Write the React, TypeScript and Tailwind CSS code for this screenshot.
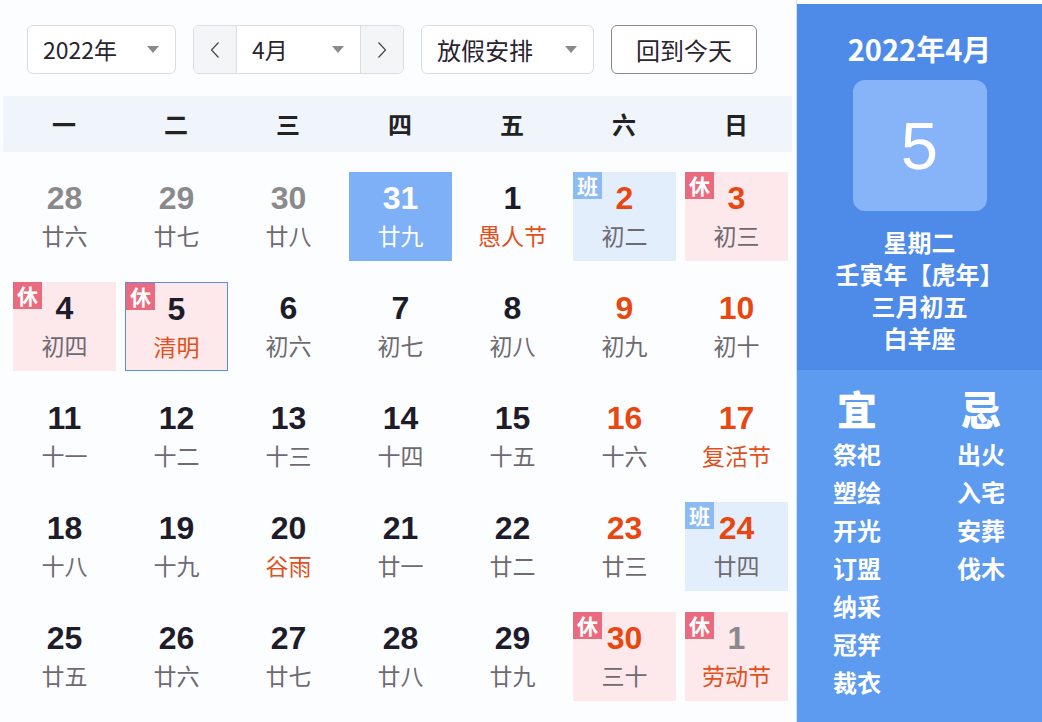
import React from "react";

type Day = {
  d: number;
  lunar: string;
  kind?: "prev" | "red" | "next";
  fest?: boolean;
  badge?: "休" | "班";
  today?: boolean;
  selected?: boolean;
};

const days: Day[] = [
  { d: 28, lunar: "廿六", kind: "prev" },
  { d: 29, lunar: "廿七", kind: "prev" },
  { d: 30, lunar: "廿八", kind: "prev" },
  { d: 31, lunar: "廿九", today: true },
  { d: 1, lunar: "愚人节", fest: true },
  { d: 2, lunar: "初二", kind: "red", badge: "班" },
  { d: 3, lunar: "初三", kind: "red", badge: "休" },
  { d: 4, lunar: "初四", badge: "休" },
  { d: 5, lunar: "清明", fest: true, badge: "休", selected: true },
  { d: 6, lunar: "初六" },
  { d: 7, lunar: "初七" },
  { d: 8, lunar: "初八" },
  { d: 9, lunar: "初九", kind: "red" },
  { d: 10, lunar: "初十", kind: "red" },
  { d: 11, lunar: "十一" },
  { d: 12, lunar: "十二" },
  { d: 13, lunar: "十三" },
  { d: 14, lunar: "十四" },
  { d: 15, lunar: "十五" },
  { d: 16, lunar: "十六", kind: "red" },
  { d: 17, lunar: "复活节", kind: "red", fest: true },
  { d: 18, lunar: "十八" },
  { d: 19, lunar: "十九" },
  { d: 20, lunar: "谷雨", fest: true },
  { d: 21, lunar: "廿一" },
  { d: 22, lunar: "廿二" },
  { d: 23, lunar: "廿三", kind: "red" },
  { d: 24, lunar: "廿四", kind: "red", badge: "班" },
  { d: 25, lunar: "廿五" },
  { d: 26, lunar: "廿六" },
  { d: 27, lunar: "廿七" },
  { d: 28, lunar: "廿八" },
  { d: 29, lunar: "廿九" },
  { d: 30, lunar: "三十", kind: "red", badge: "休" },
  { d: 1, lunar: "劳动节", kind: "next", fest: true, badge: "休" },
];

const weekNames = ["一", "二", "三", "四", "五", "六", "日"];
const yi = ["祭祀", "塑绘", "开光", "订盟", "纳采", "冠笄", "裁衣"];
const ji = ["出火", "入宅", "安葬", "伐木"];

const Caret = () => (
  <svg width="12" height="7" viewBox="0 0 12 7" className="shrink-0">
    <path d="M0 0h12L6 7z" fill="#8a8a8a" />
  </svg>
);

const Chevron = ({ dir }: { dir: "l" | "r" }) => (
  <svg width="10" height="18" viewBox="0 0 10 18">
    <path
      d={dir === "l" ? "M8.5 1.5L1.5 9l7 7.5" : "M1.5 1.5L8.5 9l-7 7.5"}
      fill="none"
      stroke="#444"
      strokeWidth="1.2"
    />
  </svg>
);

const Cell = ({ day }: { day: Day }) => {
  let bg = "";
  if (day.today) bg = "bg-[#7eb0f7]";
  else if (day.badge === "休") bg = "bg-[#fde8eb]";
  else if (day.badge === "班") bg = "bg-[#e3eefc]";

  let numColor = "text-[#1c1c2a]";
  if (day.today) numColor = "text-white";
  else if (day.kind === "prev" || day.kind === "next") numColor = "text-[#8a8a8e]";
  else if (day.kind === "red") numColor = "text-[#e8470f]";

  let lunarColor = "text-[#6e6a72]";
  if (day.today) lunarColor = "text-white";
  else if (day.fest) lunarColor = "text-[#e0511c]";

  return (
    <div
      className={`relative h-[89px] flex flex-col items-center pt-[10px] ${bg} ${
        day.selected ? "border border-[#5b8ee0]" : ""
      }`}
    >
      {day.badge && (
        <div
          className={`absolute left-0 top-0 w-[29px] h-[27px] flex items-center justify-center text-white text-[21px] font-bold leading-none ${
            day.badge === "休" ? "bg-[#ea6b80]" : "bg-[#8cbaf2]"
          }`}
        >
          {day.badge}
        </div>
      )}
      <div className={`text-[32px] font-bold leading-[32px] font-['Liberation_Sans',sans-serif] ${numColor}`}>
        {day.d}
      </div>
      <div className={`mt-[8px] text-[23px] leading-[26px] ${lunarColor}`}>{day.lunar}</div>
    </div>
  );
};

export default function App() {
  return (
    <div className="w-[1042px] h-[722px] bg-[#fcfdff] flex overflow-hidden font-['Noto_Sans_CJK_SC',sans-serif]">
      {/* left: calendar */}
      <div className="w-[797px] shrink-0 border-r border-[#cfe0f7]">
        <div className="flex items-center gap-[17px] pl-[27px] pt-[25px] h-[74px]">
          <div className="w-[149px] h-[49px] rounded-[6px] border border-[#dcdde2] bg-white flex items-center justify-between pl-[15px] pr-[16px]">
            <span className="text-[23px] text-[#2a2430]">2022年</span>
            <Caret />
          </div>
          <div className="w-[211px] h-[49px] rounded-[6px] border border-[#dcdde2] flex overflow-hidden">
            <div className="w-[43px] bg-[#f4f5f7] border-r border-[#dcdde2] flex items-center justify-center">
              <Chevron dir="l" />
            </div>
            <div className="flex-1 bg-white flex items-center justify-between pl-[15px] pr-[16px]">
              <span className="text-[23px] text-[#2a2430]">4月</span>
              <Caret />
            </div>
            <div className="w-[43px] bg-[#f4f5f7] border-l border-[#dcdde2] flex items-center justify-center">
              <Chevron dir="r" />
            </div>
          </div>
          <div className="w-[173px] h-[49px] rounded-[6px] border border-[#dcdde2] bg-white flex items-center justify-between pl-[15px] pr-[16px]">
            <span className="text-[24px] text-[#2a2430]">放假安排</span>
            <Caret />
          </div>
          <div className="w-[146px] h-[49px] rounded-[6px] border border-[#8a8790] bg-white flex items-center justify-center">
            <span className="text-[24px] text-[#2a2430]">回到今天</span>
          </div>
        </div>

        <div className="mt-[22px] ml-[3px] w-[789px] h-[56px] bg-[#f0f5fc] pl-[5px] grid grid-cols-[repeat(7,112px)] items-center">
          {weekNames.map((w) => (
            <div key={w} className="text-center text-[24px] font-bold text-[#222]">
              {w}
            </div>
          ))}
        </div>

        <div className="pl-[13px] pt-[20px] grid grid-cols-[repeat(7,103px)] gap-x-[9px] gap-y-[21px]">
          {days.map((day, i) => (
            <Cell key={i} day={day} />
          ))}
        </div>
      </div>

      {/* right: detail panel */}
      <div className="w-[245px] mt-[4px] flex flex-col text-white">
        <div className="h-[366px] bg-[#4e8be9] flex flex-col items-center">
          <div className="mt-[24px] text-[29px] font-bold leading-[40px]">2022年4月</div>
          <div className="mt-[12px] w-[134px] h-[131px] rounded-[12px] bg-[#87b4f8] flex items-center justify-center">
            <span className="text-[67px] font-['Liberation_Sans',sans-serif] leading-none">5</span>
          </div>
          <div className="mt-[15px] flex flex-col items-center text-[24px] font-bold leading-[32px]">
            <div>星期二</div>
            <div>壬寅年【虎年】</div>
            <div>三月初五</div>
            <div>白羊座</div>
          </div>
        </div>
        <div className="flex-1 bg-[#5c9bf0] flex pl-[36px] pt-[14px]">
          <div className="flex flex-col items-center w-[48px]">
            <div className="text-[40px] font-black leading-[48px] mb-[3px]">宜</div>
            {yi.map((t) => (
              <div key={t} className="text-[24px] font-bold leading-[38px] whitespace-nowrap">
                {t}
              </div>
            ))}
          </div>
          <div className="flex flex-col items-center w-[48px] ml-[76px]">
            <div className="text-[40px] font-black leading-[48px] mb-[3px]">忌</div>
            {ji.map((t) => (
              <div key={t} className="text-[24px] font-bold leading-[38px] whitespace-nowrap">
                {t}
              </div>
            ))}
          </div>
        </div>
      </div>
    </div>
  );
}
